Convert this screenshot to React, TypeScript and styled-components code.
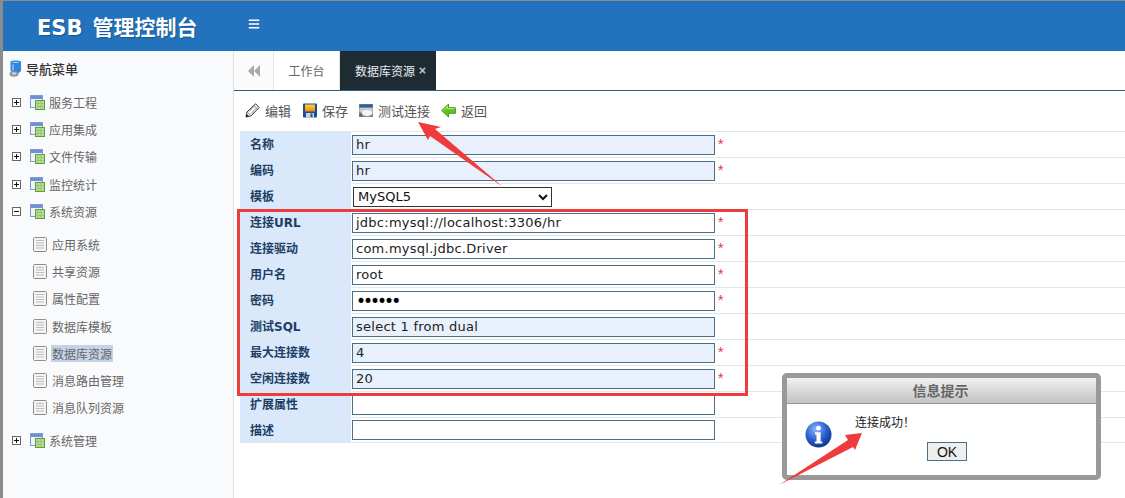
import { ReactElement } from "react";
import styled, { createGlobalStyle } from "styled-components";
import { FaBars, FaTimes } from "react-icons/fa";

const GlobalStyle = createGlobalStyle`
  html, body {
    margin: 0;
    padding: 0;
    background: #fff;
  }

  * {
    box-sizing: border-box;
  }
`;

const treeGroups = [
  { label: "服务工程", open: false, children: [] as { label: string; active?: boolean }[] },
  { label: "应用集成", open: false, children: [] },
  { label: "文件传输", open: false, children: [] },
  { label: "监控统计", open: false, children: [] },
  {
    label: "系统资源",
    open: true,
    children: [
      { label: "应用系统" },
      { label: "共享资源" },
      { label: "属性配置" },
      { label: "数据库模板" },
      { label: "数据库资源", active: true },
      { label: "消息路由管理" },
      { label: "消息队列资源" },
    ],
  },
  { label: "系统管理", open: false, children: [] },
];

const formRows = [
  { label: "名称", value: "hr", filled: true, required: true },
  { label: "编码", value: "hr", filled: true, required: true },
  { label: "模板", select: "MySQL5" },
  { label: "连接URL", value: "jdbc:mysql://localhost:3306/hr", required: true },
  { label: "连接驱动", value: "com.mysql.jdbc.Driver", required: true },
  { label: "用户名", value: "root", required: true },
  { label: "密码", value: "••••••", required: true, secret: true },
  { label: "测试SQL", value: "select 1 from dual", filled: true },
  { label: "最大连接数", value: "4", filled: true, required: true },
  { label: "空闲连接数", value: "20", filled: true, required: true },
  { label: "扩展属性", value: "" },
  { label: "描述", value: "" },
];

const FolderIcon = () => (
  <svg width="15" height="15" viewBox="0 0 15 15">
    <rect x="0.5" y="0.5" width="12" height="12" fill="#eef2fb" stroke="#7f9bd0" />
    <rect x="1" y="1" width="11" height="3" fill="#6f8fd6" />
    <rect x="5.5" y="5.5" width="9" height="9" fill="#b9dc9a" stroke="#5f9e3a" />
    <path d="M8 6v8M11 6v8M6 8.5h8M6 11.5h8" stroke="#8cc06a" strokeWidth="0.7" />
  </svg>
);

const PageIcon = () => (
  <svg width="14" height="15" viewBox="0 0 14 15">
    <rect x="0.5" y="0.5" width="13" height="14" rx="1" fill="#f4f4f4" stroke="#8e8e8e" />
    <path d="M3 3.5h8M3 6h8M3 8.5h8M3 11h8" stroke="#bdbdbd" />
  </svg>
);

const NavIcon = () => (
  <svg width="13" height="17" viewBox="0 0 13 17">
    <path d="M1.5 1.5C4 .3 9.5.3 12 1.5v8.5c0 2-2.5 3.5-5 3.5s-5.500-1.500-5.500-3.500z" fill="#2f86e0" />
    <path d="M2.500 2.300c2-.8 6-.8 8 0-2 1-6 1-8 0z" fill="#a9d0f5" />
    <path d="M3 4.500h2v6H3z" fill="#78b6ee" />
    <ellipse cx="5" cy="14" rx="4.500" ry="2.700" fill="#8f9499" />
    <ellipse cx="5" cy="13.500" rx="2.500" ry="1.300" fill="#c9cdd1" />
  </svg>
);

const PencilIcon = () => (
  <svg width="15" height="15" viewBox="0 0 15 15">
    <path d="M1 14l1-5L10.500 .8l3.700 3.700-8.300 8.400z" fill="#ffffff" stroke="#2b2b2b" strokeWidth="1" />
    <path d="M2.300 9l3.700 3.700M9 2.500l3.500 3.500M4 8.500l5.500-5.500M6 10.500l5.500-5.500" stroke="#6a6a6a" strokeWidth="0.8" />
    <path d="M1 14l.8-3 2.200 2.200z" fill="#1c1c1c" />
  </svg>
);

const SaveIcon = () => (
  <svg width="14" height="15" viewBox="0 0 14 15">
    <defs>
      <linearGradient id="saveLabel" x1="0" y1="0" x2="0" y2="1">
        <stop offset="0%" stopColor="#ffd23f" />
        <stop offset="100%" stopColor="#f08a12" />
      </linearGradient>
    </defs>
    <rect x="0" y="0.5" width="14" height="14" rx="1" fill="#17508f" />
    <rect x="2" y="1.500" width="10" height="7" fill="url(#saveLabel)" />
    <rect x="3" y="10" width="8" height="4.500" fill="#cfd3d8" />
    <rect x="7.500" y="10.500" width="2" height="3.500" fill="#17508f" />
  </svg>
);

const TestIcon = () => (
  <svg width="14" height="15" viewBox="0 0 15 15">
    <rect x="0" y="0.5" width="15" height="14" fill="#7b8a99" />
    <rect x="0.500" y="1" width="14" height="3.500" fill="#2f5f92" />
    <rect x="0.500" y="4.500" width="14" height="5" fill="#c3ccd6" />
    <path d="M3 10c0-2.500 3-3.400 5.400-3 2.600.3 6 1.100 6 3s-2.600 3.500-6 3.500S3 12.200 3 10z" fill="#f4f4f2" />
    <path d="M.5 11h3v3h-3z" fill="#55677a" />
  </svg>
);

const BackIcon = () => (
  <svg width="15" height="15" viewBox="0 0 16 15">
    <path d="M0.700 7.500L8 0.700v3.800h7.300v6H8v3.800z" fill="#63c21f" stroke="#3f8f1c" />
    <path d="M2.500 7.200L7 3v2.500h7.300" fill="none" stroke="#c4f08e" />
  </svg>
);

const InfoIcon = () => (
  <svg width="27" height="27" viewBox="0 0 27 27">
    <defs>
      <radialGradient id="infoBall" cx="40%" cy="30%" r="75%">
        <stop offset="0%" stopColor="#8fb5f5" />
        <stop offset="55%" stopColor="#2a5fd0" />
        <stop offset="100%" stopColor="#0d2e86" />
      </radialGradient>
    </defs>
    <circle cx="13.500" cy="13.500" r="13" fill="url(#infoBall)" />
    <circle cx="13.500" cy="7.200" r="2.400" fill="#fff" />
    <path d="M10 11.200h5.600v9.200h1.700v2.200H9.800v-2.200h1.700v-7H10z" fill="#fff" />
  </svg>
);

const App = (): ReactElement => {
  return (
    <Page>
      <GlobalStyle />
      <Header>
        <Brand>
          ESB<BrandName>管理控制台</BrandName>
        </Brand>
        <MenuToggle>
          <FaBars size={12} color="#ffffff" />
        </MenuToggle>
      </Header>

      <Body>
        <Sidebar>
          <NavTitle>
            <NavIcon />
            导航菜单
          </NavTitle>
          {treeGroups.map((group) => (
            <div key={group.label}>
              <TreeRow>
                <ExpandBox $open={group.open} />
                <FolderIcon />
                <TreeLabel>{group.label}</TreeLabel>
              </TreeRow>
              {group.children.length > 0 && (
                <ChildList>
                  {group.children.map((child) => (
                    <ChildRow key={child.label}>
                      <PageIcon />
                      <ChildLabel $active={child.active}>{child.label}</ChildLabel>
                    </ChildRow>
                  ))}
                </ChildList>
              )}
            </div>
          ))}
        </Sidebar>

        <Main>
          <TabBar>
            <TabBack>
              <BackTriangle />
              <BackTriangle />
            </TabBack>
            <Tab>工作台</Tab>
            <ActiveTab>
              数据库资源
              <FaTimes size={9} color="#b4bac0" />
            </ActiveTab>
          </TabBar>

          <Toolbar>
            <ToolButton $width={58}>
              <PencilIcon />
              编辑
            </ToolButton>
            <ToolButton $width={56}>
              <SaveIcon />
              保存
            </ToolButton>
            <ToolButton $width={82}>
              <TestIcon />
              测试连接
            </ToolButton>
            <ToolButton $width={50}>
              <BackIcon />
              返回
            </ToolButton>
          </Toolbar>

          <FormTable>
            {formRows.map((row) => (
              <FormRow key={row.label}>
                <FieldLabel>{row.label}</FieldLabel>
                <FieldCell>
                  {row.select ? (
                    <FieldSelect defaultValue={row.select}>
                      <option>{row.select}</option>
                    </FieldSelect>
                  ) : (
                    <FieldInput $filled={row.filled} $secret={row.secret}>
                      {row.value}
                    </FieldInput>
                  )}
                  {row.required && <Required>*</Required>}
                </FieldCell>
              </FormRow>
            ))}
          </FormTable>
        </Main>
      </Body>

      <Highlight />

      <ArrowMark $left={410} $top={115} width="100" height="80" viewBox="410 115 100 80">
        <polygon points="418,122 441,127 435,129 503,187 430,136 428,140" fill="#ee3b3b" />
      </ArrowMark>

      <Dialog>
        <DialogTitle>信息提示</DialogTitle>
        <DialogBody>
          <InfoSlot>
            <InfoIcon />
          </InfoSlot>
          <DialogContent>
            <DialogText>连接成功！</DialogText>
            <OkButton>OK</OkButton>
          </DialogContent>
        </DialogBody>
      </Dialog>

      <ArrowMark $left={775} $top={428} width="95" height="62" viewBox="775 428 95 62">
        <polygon points="862,433 845,435 848,440 779,485 853,447 855,450" fill="#ee3b3b" />
      </ArrowMark>
    </Page>
  );
};

const Page = styled.div`
  position: relative;
  display: flex;
  flex-direction: column;
  width: 1125px;
  height: 498px;
  padding: 1px 0 0 3px;
  overflow: hidden;
  background: #8c8c8c;
  font-family: "Noto Sans CJK SC", "Liberation Sans", sans-serif;
`;

const Header = styled.header`
  display: flex;
  flex: none;
  align-items: center;
  height: 50px;
  background: #2272bd;
`;

const Brand = styled.div`
  width: 240px;
  padding-left: 34px;
  color: #ffffff;
  font-family: "DejaVu Sans", "Noto Sans CJK SC", sans-serif;
  font-size: 21px;
  font-weight: 700;
  text-shadow: 1px 1px 1px rgba(0, 0, 0, 0.25);
  white-space: nowrap;
`;

const BrandName = styled.span`
  margin-left: 10px;
`;

const MenuToggle = styled.div`
  display: flex;
  padding: 0 0 5px 5px;
`;

const Body = styled.div`
  display: flex;
  flex: 1;
  min-height: 0;
  background: #ffffff;
`;

const Sidebar = styled.aside`
  flex: none;
  width: 231px;
  padding-top: 8px;
  background: #f9fafc;
  border-right: 1px solid #dcdfe3;
`;

const NavTitle = styled.div`
  display: flex;
  align-items: center;
  gap: 4px;
  height: 19px;
  margin-bottom: 11px;
  padding-left: 6px;
  color: #333333;
  font-size: 13px;
  font-weight: 500;
`;

const TreeRow = styled.div`
  display: flex;
  align-items: center;
  height: 27.2px;
  padding-left: 9px;
`;

const ExpandBox = styled.span<{ $open: boolean }>`
  position: relative;
  width: 9px;
  height: 9px;
  margin-right: 9px;
  background: #ffffff;
  border: 1px solid #666666;

  &::before {
    content: "";
    position: absolute;
    top: 3px;
    left: 1px;
    width: 5px;
    height: 1px;
    background: #111111;
  }

  &::after {
    content: "";
    display: ${(props) => (props.$open ? "none" : "block")};
    position: absolute;
    top: 1px;
    left: 3px;
    width: 1px;
    height: 5px;
    background: #111111;
  }
`;

const TreeLabel = styled.span`
  margin-left: 4px;
  color: #666666;
  font-size: 12px;
`;

const ChildList = styled.div`
  padding: 6px 0;
`;

const ChildRow = styled.div`
  display: flex;
  align-items: center;
  height: 27.2px;
  padding-left: 30px;
`;

const ChildLabel = styled.span<{ $active?: boolean }>`
  margin-left: 4px;
  padding: 0 1px;
  color: #666666;
  font-size: 12px;
  line-height: 17px;
  background: ${(props) => (props.$active ? "#c5d3e8" : "transparent")};
`;

const Main = styled.main`
  flex: 1;
  min-width: 0;
`;

const TabBar = styled.div`
  display: flex;
  height: 40px;
  background: #ffffff;
  border-bottom: 1px solid #2d5f7f;
`;

const TabBack = styled.div`
  display: flex;
  align-items: center;
  justify-content: center;
  width: 40px;
  border-right: 1px solid #e4e6e9;
  background: #fbfbfb;
`;

const BackTriangle = styled.span`
  width: 0;
  height: 0;
  border-top: 6px solid transparent;
  border-right: 6px solid #a9a9a9;
  border-bottom: 6px solid transparent;
`;

const Tab = styled.div`
  display: flex;
  align-items: center;
  justify-content: center;
  width: 66px;
  color: #666666;
  font-size: 12px;
  border-right: 1px solid #e4e6e9;
`;

const ActiveTab = styled.div`
  display: flex;
  align-items: center;
  gap: 3px;
  width: 96px;
  padding-left: 15px;
  color: #e8ebee;
  font-size: 12px;
  background: #1f2b33;
`;

const Toolbar = styled.div`
  display: flex;
  align-items: center;
  height: 40px;
  padding: 0 0 2px 11px;
`;

const ToolButton = styled.div<{ $width: number }>`
  display: flex;
  align-items: center;
  gap: 5px;
  width: ${(props) => props.$width}px;
  color: #555555;
  font-size: 13px;
  white-space: nowrap;
`;

const FormTable = styled.div`
  margin-left: 6px;
`;

const FormRow = styled.div`
  display: flex;
  height: 26px;
  border-top: 1px solid #e3e6ea;

  &:last-child {
    border-bottom: 1px solid #e3e6ea;
  }
`;

const FieldLabel = styled.div`
  display: flex;
  flex: none;
  align-items: center;
  width: 111px;
  padding: 0 0 2px 10px;
  color: #1e3f63;
  font-family: "DejaVu Sans", "Noto Sans CJK SC", sans-serif;
  font-size: 12px;
  font-weight: 700;
  background: #d9e8fb;
`;

const FieldCell = styled.div`
  display: flex;
  flex: 1;
  align-items: center;
  padding-left: 1px;
`;

const FieldInput = styled.div<{ $filled?: boolean; $secret?: boolean }>`
  display: flex;
  align-items: center;
  width: 363px;
  height: 20px;
  padding-left: 3px;
  color: ${(props) => (props.$secret ? "#000000" : "#222222")};
  font-family: "DejaVu Sans", sans-serif;
  font-size: ${(props) => (props.$secret ? "17px" : "13px")};
  letter-spacing: ${(props) => (props.$secret ? "-3px" : "0.25px")};
  background: ${(props) => (props.$filled ? "#e8f0fb" : "#ffffff")};
  border: 1px solid #4a7088;
`;

const FieldSelect = styled.select`
  width: 199px;
  height: 20px;
  margin-left: 1px;
  color: #111111;
  font-family: "DejaVu Sans", sans-serif;
  font-size: 13px;
  background: #ffffff;
  border: 1px solid #333333;
  border-radius: 0;
`;

const Required = styled.span`
  align-self: flex-start;
  margin: 5px 0 0 3px;
  color: #e8303a;
  font-family: "Liberation Sans", sans-serif;
  font-size: 14px;
  line-height: 14px;
`;

const Highlight = styled.div`
  position: absolute;
  top: 209px;
  left: 237px;
  width: 511px;
  height: 187px;
  border: 3px solid #ee3b3b;
  pointer-events: none;
`;

const ArrowMark = styled.svg<{ $left: number; $top: number }>`
  position: absolute;
  top: ${(props) => props.$top}px;
  left: ${(props) => props.$left}px;
  pointer-events: none;
`;

const Dialog = styled.div`
  position: absolute;
  top: 373px;
  left: 782px;
  width: 319px;
  height: 107px;
  overflow: hidden;
  background: #ffffff;
  border: 5px solid #999999;
  border-radius: 5px;
`;

const DialogTitle = styled.div`
  display: flex;
  align-items: center;
  justify-content: center;
  height: 26px;
  padding: 0 2px 2px 0;
  color: #666666;
  font-size: 14px;
  font-weight: 700;
  background: linear-gradient(#f2f2f2, #c2c2c2);
  border-bottom: 1px solid #999999;
`;

const DialogBody = styled.div`
  display: flex;
  padding-left: 18px;
`;

const InfoSlot = styled.div`
  display: flex;
  flex: none;
  width: 50px;
  padding-top: 17px;
`;

const DialogContent = styled.div`
  display: flex;
  flex: 1;
  flex-direction: column;
  padding-top: 9px;
`;

const DialogText = styled.div`
  color: #222222;
  font-size: 12px;
  line-height: 18px;
`;

const OkButton = styled.div`
  display: flex;
  align-items: center;
  justify-content: center;
  align-self: flex-start;
  width: 40px;
  height: 19px;
  margin: 11px 0 0 72px;
  color: #111111;
  font-family: "Liberation Sans", sans-serif;
  font-size: 14px;
  background: #eeeeee;
  border: 1px solid #4a7088;
`;

export default App;
